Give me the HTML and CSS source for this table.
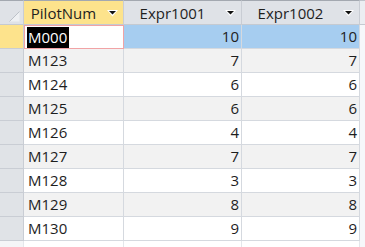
FILE: index.html
```html
<!DOCTYPE html>
<html>
<head>
<meta charset="utf-8">
<link rel="stylesheet" href="styles.css">
</head>
<body>
<table class="grid">
  <colgroup>
    <col class="c-sel"><col class="c-1"><col class="c-2"><col class="c-3"><col class="c-fill">
  </colgroup>
  <thead>
    <tr>
      <th class="corner"><svg class="corner-mark" width="23" height="23" viewBox="0 0 23 23"><polygon points="9.5,20.5 19.5,20.5 19.5,10.5" fill="#eef0f3"/><line x1="9.5" y1="20.5" x2="19.5" y2="10.5" stroke="#bcc1c8" stroke-width="1"/></svg></th>
      <th class="hd active"><div class="hd-in"><span class="label">PilotNum</span><span class="arrow"><svg width="11" height="7" viewBox="0 0 11 7"><polygon points="0,0 11,0 5.5,6.5" fill="#fff"/><polygon points="2,1 9,1 5.5,4.5" fill="#111"/></svg></span></div></th>
      <th class="hd"><div class="hd-in"><span class="label">Expr1001</span><span class="arrow"><svg width="11" height="7" viewBox="0 0 11 7"><polygon points="0,0 11,0 5.5,6.5" fill="#fff"/><polygon points="2,1 9,1 5.5,4.5" fill="#111"/></svg></span></div></th>
      <th class="hd"><div class="hd-in"><span class="label">Expr1002</span><span class="arrow"><svg width="11" height="7" viewBox="0 0 11 7"><polygon points="0,0 11,0 5.5,6.5" fill="#fff"/><polygon points="2,1 9,1 5.5,4.5" fill="#111"/></svg></span></div></th>
      <th class="hd-fill"></th>
    </tr>
  </thead>
  <tbody>
    <tr class="row selected">
      <td class="sel current"></td>
      <td class="txt focus"><span class="hilite">M000</span></td>
      <td class="num">10</td>
      <td class="num">10</td>
      <td class="fill"></td>
    </tr>
    <tr class="row alt"><td class="sel"></td><td class="txt">M123</td><td class="num">7</td><td class="num">7</td><td class="fill"></td></tr>
    <tr class="row"><td class="sel"></td><td class="txt">M124</td><td class="num">6</td><td class="num">6</td><td class="fill"></td></tr>
    <tr class="row alt"><td class="sel"></td><td class="txt">M125</td><td class="num">6</td><td class="num">6</td><td class="fill"></td></tr>
    <tr class="row"><td class="sel"></td><td class="txt">M126</td><td class="num">4</td><td class="num">4</td><td class="fill"></td></tr>
    <tr class="row alt"><td class="sel"></td><td class="txt">M127</td><td class="num">7</td><td class="num">7</td><td class="fill"></td></tr>
    <tr class="row"><td class="sel"></td><td class="txt">M128</td><td class="num">3</td><td class="num">3</td><td class="fill"></td></tr>
    <tr class="row alt"><td class="sel"></td><td class="txt">M129</td><td class="num">8</td><td class="num">8</td><td class="fill"></td></tr>
    <tr class="row"><td class="sel"></td><td class="txt">M130</td><td class="num">9</td><td class="num">9</td><td class="fill"></td></tr>
    <tr class="row newrow"><td class="sel"></td><td class="txt"></td><td class="num"></td><td class="num"></td><td class="fill"></td></tr>
  </tbody>
</table>
</body>
</html>
```
FILE: styles.css
```css
* { box-sizing: border-box; }
html, body {
  margin: 0;
  padding: 0;
  background: #f6f7fa;
  overflow: hidden;
}
body {
  font-family: "Open Sans", "Liberation Sans", sans-serif;
  font-size: 15px;
  color: #1e1e1e;
}
.grid {
  border-collapse: separate;
  border-spacing: 0;
  table-layout: fixed;
  width: 365px;
}
.c-sel { width: 24px; }
.c-1 { width: 100px; }
.c-2 { width: 118px; }
.c-3 { width: 118px; }
.c-fill { width: 5px; }

th {
  height: 25px;
  padding: 0;
  border-top: 1px solid #a3a8b0;
  border-bottom: 1px solid #c5cad1;
  border-right: 1px solid #c9cdd4;
  background: #dfe2e7;
  font-weight: normal;
  vertical-align: middle;
}
th.corner {
  position: relative;
  background: #dfe2e7;
}
.corner-mark {
  position: absolute;
  left: 0;
  top: 0;
}
th.active {
  background: #fde38c;
}
th.hd-fill {
  border-right: none;
  background: #eceef2;
  border-top-color: #c0c4cb;
}
.hd-in {
  display: flex;
  align-items: center;
  height: 23px;
}
.label {
  flex: 1;
  text-align: center;
  white-space: nowrap;
  line-height: 23px;
  padding-top: 1px;
}
.arrow {
  width: 20px;
  display: flex;
  justify-content: center;
  align-items: center;
  padding-right: 2px;
  padding-top: 2px;
}
.arrow svg { display: block; }

td {
  height: 24px;
  padding: 0;
  border-bottom: 1px solid #d5d9df;
  border-right: 1px solid #d5d9df;
  background: #ffffff;
  white-space: nowrap;
  line-height: 23px;
  vertical-align: middle;
}
.row.alt td { background: #f2f2f2; }
td.sel {
  background: #e0e3e7;
  border-right-color: #c9cdd4;
  border-bottom-color: #c9cdd4;
}
.row.alt td.sel { background: #e0e3e7; }
td.sel.current { background: #fde38c; }
td.txt { padding-left: 4px; }
td.num { text-align: right; padding-right: 2px; }
td.fill {
  border: none;
  background: #f6f7fa;
}
.row.alt td.fill { background: #f6f7fa; }

.row.selected td.num { background: #a6cdf0; }
td.focus {
  background: #ffffff;
  border-right-color: #f1a3a5;
  border-bottom-color: #f1a3a5;
  box-shadow: inset 1px 1px 0 #f1a3a5;
  padding-left: 3px;
}
.hilite {
  display: inline-block;
  background: #000;
  color: #fff;
  height: 21px;
  line-height: 21px;
  padding: 0 2px 0 1px;
  vertical-align: middle;
}
.row.newrow td {
  border-bottom: none;
  border-right-color: #e4e7eb;
  background: #ffffff;
}
.row.newrow td.sel { background: #f4f5f7; }
.row.newrow td.fill { background: #f6f7fa; }
```
